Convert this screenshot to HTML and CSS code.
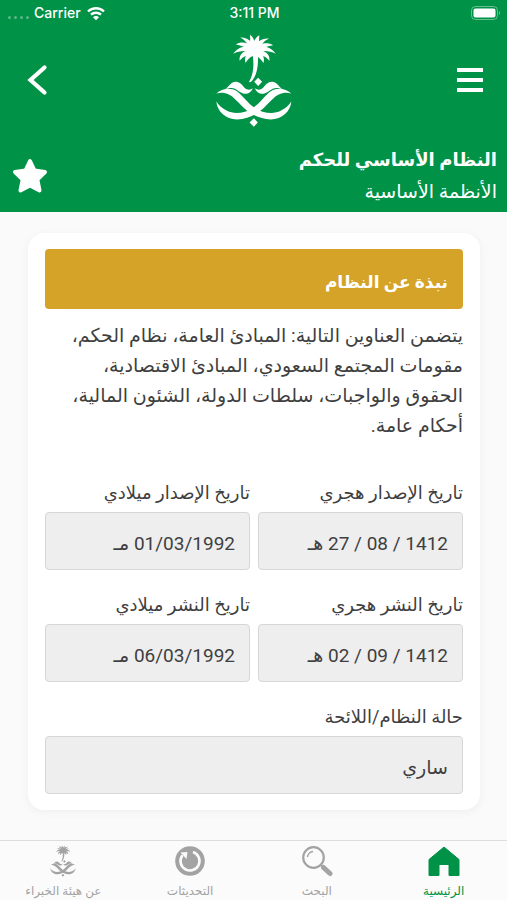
FILE: index.html
```html
<!DOCTYPE html>
<html lang="ar" dir="rtl">
<head>
<meta charset="utf-8">
<meta name="viewport" content="width=device-width, initial-scale=1">
<title>النظام الأساسي للحكم</title>
<link rel="stylesheet" href="styles.css">
</head>
<body>
<svg class="sprite" aria-hidden="true">
  <symbol id="emblem" viewBox="30 15 235 285">
    <path d="M141 66C148 100 149 134 132 163L139 161C157 144 163 108 158 66Z"/>
    <path d="M149 40C162 44 174 54 176 68C172 80 160 84 149 86C138 84 126 80 122 68C124 54 136 44 149 40Z"/>
    <path d="M151 69C139 50 105 48 85 77C105 67 126 65 149 76Z"/>
    <path d="M151 70C129 60 101 73 104 98C115 84 130 79 149 79Z"/>
    <path d="M151 68C134 66 115 81 122 105C130 92 139 84 151 81Z"/>
    <path d="M151 68C140 45 112 36 93 49C114 52 129 61 145 77Z"/>
    <path d="M152 69C149 43 128 26 106 28C125 38 132 53 142 73Z"/>
    <path d="M144 69C154 45 148 27 135 20C138 35 133 50 137 67Z"/>
    <path d="M144 69C142 44 150 28 164 21C161 36 165 50 159 68Z"/>
    <path d="M145 69C149 43 170 28 193 31C173 40 167 55 157 73Z"/>
    <path d="M147 68C158 45 186 40 205 51C184 54 170 61 153 77Z"/>
    <path d="M147 69C159 50 193 48 213 77C193 67 172 65 149 76Z"/>
    <path d="M147 70C169 60 197 73 194 98C183 84 168 79 149 79Z"/>
    <path d="M147 68C164 66 183 81 176 105C168 92 159 84 147 81Z"/>
    <path d="M160 149L172 161L160 174L148 161ZM147 271L159 284L147 297L134 284Z"/>
    <g id="sword">
      <path d="M34 197C50 182 76 177 95 189C113 201 128 226 150 240C172 255 205 261 228 249C243 241 252 233 260 221C258 250 232 275 198 275C165 274 138 259 118 241C97 222 82 198 58 195C49 193 42 195 34 197Z"/>
      <path d="M62 183C74 172 78 162 92 161C110 161 116 180 126 184C132 187 138 185 144 181C139 195 126 201 113 196C100 190 92 180 80 180C73 180 68 182 62 183Z"/>
    </g>
    <use href="#sword" transform="translate(294 0) scale(-1 1)"/>
  </symbol>
</svg>

<header class="header">
  <div class="status" dir="ltr">
    <div class="carrier">
      <span class="signal"><i></i><i></i><i></i><i></i></span>
      <span>Carrier</span>
      <svg class="wifi" viewBox="0 0 20 15" aria-hidden="true">
        <path d="M2 5.5A11.5 11.5 0 0 1 18 5.5M5 8.7A7.2 7.2 0 0 1 15 8.7" fill="none" stroke="currentColor" stroke-width="2.4"/>
        <path d="M7 11.2A4.2 4.2 0 0 1 13 11.2L10 14.3Z" fill="currentColor"/>
      </svg>
    </div>
    <time>3:11 PM</time>
    <svg class="battery" viewBox="0 0 30 14" aria-hidden="true">
      <rect x="0.5" y="0.5" width="26" height="13" rx="4" fill="none" stroke="currentColor" opacity=".4"/>
      <rect x="2.500" y="2.500" width="22" height="9" rx="2" fill="currentColor"/>
      <path d="M28 5Q30 7 28 9Z" fill="currentColor" opacity=".5"/>
    </svg>
  </div>
  <div class="nav">
    <button class="icon-button" type="button" aria-label="القائمة">
      <svg class="menu-icon" viewBox="0 0 26 26"><path d="M0 3H26M0 13H26M0 23H26" stroke="currentColor" stroke-width="4"/></svg>
    </button>
    <svg class="logo emblem" role="img" aria-label="الشعار"><use href="#emblem"/></svg>
    <button class="icon-button end" type="button" aria-label="رجوع">
      <svg class="back-icon" viewBox="0 0 20 32"><path d="M17.500 3.500L3.500 16L17.500 28.500" fill="none" stroke="currentColor" stroke-width="4.200" stroke-linecap="round"/></svg>
    </button>
  </div>
  <div class="heading">
    <div>
      <h1>النظام الأساسي للحكم</h1>
      <p>الأنظمة الأساسية</p>
    </div>
    <button class="icon-button" type="button" aria-label="المفضلة">
      <svg class="star-icon" viewBox="0 0 36 36"><path d="M18 3L22.500 12.500L33 14L25.300 21.500L27.500 32.500L18 27.500L8.500 32.500L10.700 21.500L3 14L13.500 12.500Z" fill="currentColor" stroke="currentColor" stroke-width="4" stroke-linejoin="round"/></svg>
    </button>
  </div>
</header>

<main class="content">
  <section class="card">
    <h2>نبذة عن النظام</h2>
    <p class="summary">يتضمن العناوين التالية: المبادئ العامة، نظام الحكم،<br>مقومات المجتمع السعودي، المبادئ الاقتصادية،<br>الحقوق والواجبات، سلطات الدولة، الشئون المالية،<br>أحكام عامة.</p>
    <form class="fields">
      <div class="field">
        <label for="issue-hijri">تاريخ الإصدار هجري</label>
        <input id="issue-hijri" type="text" readonly value="1412 / 08 / 27 هـ">
      </div>
      <div class="field">
        <label for="issue-greg">تاريخ الإصدار ميلادي</label>
        <input id="issue-greg" type="text" readonly value="01/03/1992 مـ">
      </div>
      <div class="field">
        <label for="pub-hijri">تاريخ النشر هجري</label>
        <input id="pub-hijri" type="text" readonly value="1412 / 09 / 02 هـ">
      </div>
      <div class="field">
        <label for="pub-greg">تاريخ النشر ميلادي</label>
        <input id="pub-greg" type="text" readonly value="06/03/1992 مـ">
      </div>
      <div class="field wide">
        <label for="state">حالة النظام/اللائحة</label>
        <input id="state" type="text" readonly value="ساري">
      </div>
    </form>
  </section>
</main>

<nav class="tabs">
  <a class="tab active" href="#home">
    <svg viewBox="0 0 32 32" aria-hidden="true"><path d="M16 2L31 14.500V30.500H21V19.500H11V30.500H1V14.500Z" fill="currentColor" stroke="currentColor" stroke-linejoin="round"/></svg>
    <span>الرئيسية</span>
  </a>
  <a class="tab" href="#search">
    <svg viewBox="0 0 32 32" aria-hidden="true" fill="none" stroke="currentColor"><circle cx="12.500" cy="12.500" r="10.300" stroke-width="2.200"/><path d="M6.500 12A6 6 0 0 1 12 6.500" stroke-width="1.500"/><path d="M19.500 19.500L23 23" stroke-width="2"/><path d="M22.500 22.500L29 28.500" stroke-width="5" stroke-linecap="round"/></svg>
    <span>البحث</span>
  </a>
  <a class="tab" href="#updates">
    <svg viewBox="0 0 32 32" aria-hidden="true"><circle cx="16" cy="16" r="14.800" fill="currentColor"/><path d="M19 7A9.500 9.500 0 1 1 8.500 10.200" fill="none" stroke="#fbfbfb" stroke-width="2.600"/><path d="M6.500 7.500L13.500 7L12.500 14Z" fill="#fbfbfb"/></svg>
    <span>التحديثات</span>
  </a>
  <a class="tab" href="#about">
    <svg class="emblem" aria-hidden="true"><use href="#emblem"/></svg>
    <span>عن هيئة الخبراء</span>
  </a>
</nav>
</body>
</html>
```
FILE: styles.css
```css
* {
  box-sizing: border-box;
}

body {
  margin: 0;
  min-height: 100vh;
  display: flex;
  flex-direction: column;
  background: #fafafa;
  color: #3f3f41;
  font-family: Roboto, "DejaVu Sans", sans-serif;
  font-size: 19px;
}

h1, h2, p {
  margin: 0;
}

.sprite {
  position: absolute;
  width: 0;
  height: 0;
}

.emblem {
  fill: currentColor;
}

.header {
  background: #009247;
  color: #fff;
}

.status {
  display: grid;
  grid-template-columns: 1fr auto 1fr;
  align-items: center;
  height: 26px;
  padding: 0 6px 0 8px;
  font: 500 14px/26px Inter, sans-serif;
}

.carrier {
  display: flex;
  align-items: center;
  gap: 5px;
}

.signal {
  display: flex;
  gap: 3px;
  padding-top: 8px;
}

.signal i {
  width: 3px;
  height: 3px;
  border-radius: 50%;
  background: #fff;
  opacity: .35;
}

.wifi {
  width: 20px;
  height: 15px;
}

.battery {
  width: 30px;
  height: 14px;
  justify-self: end;
}

.nav {
  display: grid;
  grid-template-columns: 1fr auto 1fr;
  align-items: center;
  height: 108px;
  padding: 0 24px;
}

.logo {
  width: 78px;
  height: 95px;
}

.icon-button {
  display: flex;
  padding: 0;
  border: 0;
  background: none;
  color: inherit;
  cursor: pointer;
}

.end {
  justify-self: end;
}

.menu-icon {
  width: 26px;
  height: 26px;
}

.back-icon {
  width: 26px;
  height: 32px;
}

.star-icon {
  width: 36px;
  height: 36px;
}

.heading {
  display: flex;
  align-items: center;
  justify-content: space-between;
  padding: 10px 10px 4px 12px;
}

h1 {
  font-size: 18px;
  font-weight: 700;
  line-height: 32px;
}

.heading p {
  line-height: 32px;
}

.content {
  flex: 1;
  padding: 21px 27px 30px 28px;
}

.card {
  padding: 16px 17px;
  border-radius: 16px;
  background: #fff;
  box-shadow: 0 2px 10px rgba(0, 0, 0, .05);
}

h2 {
  padding: 6px 15px 0;
  border-radius: 4px;
  background: #d4a328;
  color: #fff;
  font-size: 17px;
  font-weight: 700;
  line-height: 54px;
}

.summary {
  padding-top: 12px;
  line-height: 30px;
}

.fields {
  display: grid;
  grid-template-columns: 1fr 1fr;
  gap: 22px 8px;
  padding-top: 39px;
}

.wide {
  grid-column: 1 / -1;
}

label {
  display: block;
  height: 32px;
  font-size: 18px;
  line-height: 26px;
  white-space: nowrap;
}

input {
  display: block;
  width: 100%;
  height: 58px;
  padding: 4px 14px 0;
  border: 1px solid #d6d6d6;
  border-radius: 4px;
  background: #eee;
  color: inherit;
  font: inherit;
}

.tabs {
  display: grid;
  grid-template-columns: repeat(4, 1fr);
  height: 60px;
  border-top: 1px solid #ddd;
  background: #fbfbfb;
}

.tab {
  display: flex;
  flex-direction: column;
  align-items: center;
  gap: 4px;
  padding-top: 4px;
  border-bottom: 2px solid transparent;
  color: #a3a3a3;
  font-size: 12px;
  line-height: 20px;
  text-decoration: none;
  white-space: nowrap;
}

.tab svg {
  width: 32px;
  height: 32px;
  flex: none;
}

.active {
  border-bottom-color: #008219;
  color: #009247;
}
```
